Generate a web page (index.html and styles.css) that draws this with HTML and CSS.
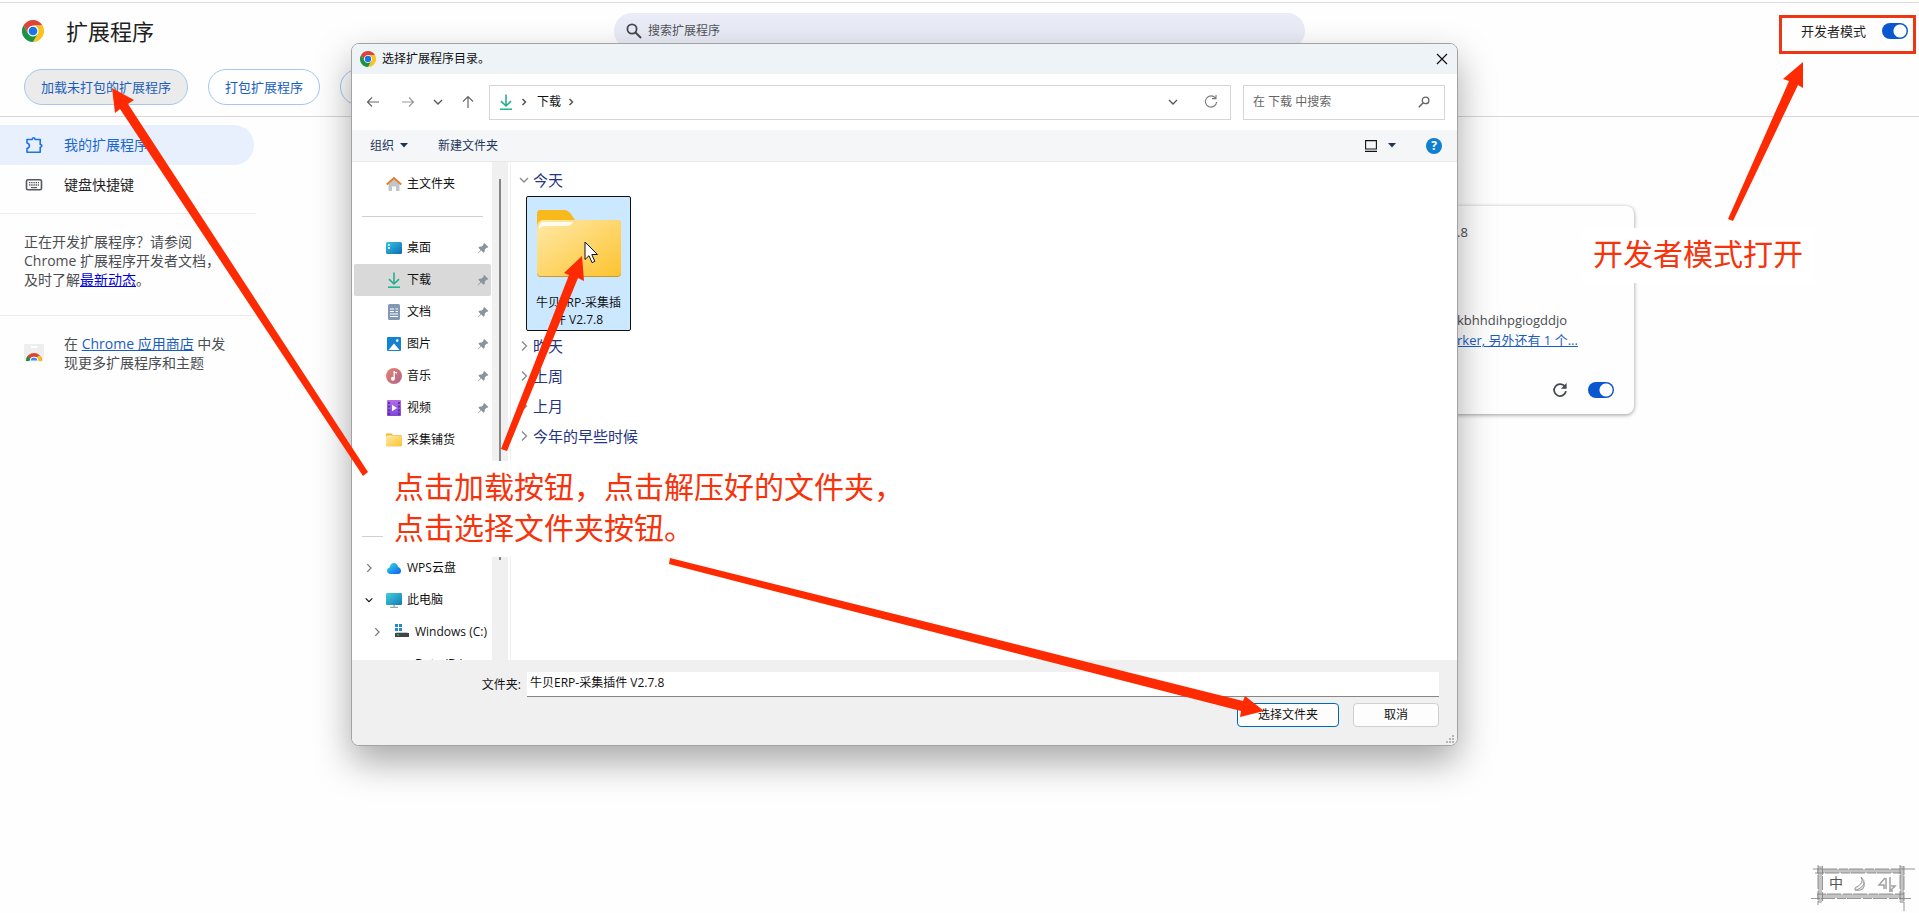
FILE: index.html
```html
<!DOCTYPE html>
<html lang="zh-CN">
<head>
<meta charset="utf-8">
<title>扩展程序</title>
<link rel="stylesheet" href="styles.css">
</head>
<body>
<svg class="defs" aria-hidden="true">
  <defs>
    <symbol id="chrome" viewBox="0 0 48 48">
      <circle cx="24" cy="24" r="12" fill="#fff"/>
      <path fill="#dc4437" d="M24,12H44.78a24,24,0,0,0-41.56,0L13.61,30l0,0A11.99,11.99,0,0,1,24,12Z"/>
      <path fill="#fcc31e" d="M34.39,30,24,48A23.99,23.99,0,0,0,44.78,12H24l0,0A11.99,11.99,0,0,1,34.39,30Z"/>
      <path fill="#1e9244" d="M13.61,30,3.22,12A23.99,23.99,0,0,0,24,48L34.39,30l0,0a11.99,11.99,0,0,1-20.78,0Z"/>
      <circle cx="24" cy="24" r="9.5" fill="#1a73e8"/>
    </symbol>
    <symbol id="download" viewBox="0 0 16 16">
      <g fill="none" stroke="#27ae8b" stroke-width="1.6"><path d="M8 0.5V11.5M3 7.2L8 12L13 7.2"/><path d="M2 15.2H14" stroke="#20b58f"/></g>
    </symbol>
    <symbol id="chev-r" viewBox="0 0 12 12"><path d="M4 1.5L8.5 6L4 10.5" fill="none" stroke="currentColor" stroke-width="1.3"/></symbol>
    <symbol id="chev-s" viewBox="0 0 10 10"><path d="M3.500 2L6.500 5L3.500 8" fill="none" stroke="currentColor" stroke-width="1.500"/></symbol>
    <symbol id="chev-d" viewBox="0 0 12 12"><path d="M2 4L6 8L10 4" fill="none" stroke="currentColor" stroke-width="1.3"/></symbol>
    <symbol id="pin" viewBox="0 0 12 12"><path fill="#8b949e" d="M7.2 1L11.4 5L10.4 5.8L9.6 5.7L7.8 7.5L7.6 10L6.6 10.8L4.2 8.5L1 11.6L.6 11.2L3.6 8L1.4 5.7L2.2 4.8L4.7 4.5L6.5 2.7L6.4 1.8Z"/></symbol>
    <symbol id="caret" viewBox="0 0 8 5"><path d="M0 0H8L4 4.6Z" fill="#1d3559"/></symbol>
    <symbol id="folder" viewBox="0 0 84 68">
      <path d="M3 0H27Q31 0 34 4L38 10H80Q84 10 84 14V40H0V4Q0 0 3 0Z" fill="#f8b91c"/>
      <path d="M2 15Q2 11 6 11H80Q84 11 84 15V63Q84 67 80 67H4Q0 67 0 63V17Z" fill="#c79a2c"/>
      <path d="M0 17Q1 10 6 10H80Q84 10 84 14V62Q84 66 80 66H4Q0 66 0 62Z" fill="url(#fg)"/>
      <path d="M2 17Q3 12 7 12H36Q34 16 29 16H7Q4 16 2 19Z" fill="#fff" opacity=".85"/>
    </symbol>
    <linearGradient id="fg" x1="0" y1="0" x2="1" y2="1"><stop offset="0" stop-color="#ffe9a8"/><stop offset="1" stop-color="#fdc32f"/></linearGradient>
    <linearGradient id="blue" x1="0" y1="0" x2="1" y2="1"><stop offset="0" stop-color="#35c3e8"/><stop offset="1" stop-color="#0e6bb0"/></linearGradient>
    <linearGradient id="teal" x1="0" y1="0" x2="1" y2="1"><stop offset="0" stop-color="#41d0dc"/><stop offset="1" stop-color="#1579b5"/></linearGradient>
    <linearGradient id="rose" x1="0" y1="0" x2="1" y2="1"><stop offset="0" stop-color="#e6866a"/><stop offset="1" stop-color="#b0628f"/></linearGradient>
    <linearGradient id="violet" x1="0" y1="0" x2="0" y2="1"><stop offset="0" stop-color="#b36be8"/><stop offset="1" stop-color="#8046d6"/></linearGradient>
    <linearGradient id="cloud" x1="0" y1="0" x2="1" y2="1"><stop offset="0" stop-color="#38e0d8"/><stop offset=".6" stop-color="#1a8ff0"/><stop offset="1" stop-color="#1260e0"/></linearGradient>
  </defs>
</svg>

<header class="top">
  <div class="bar">
    <div class="brand">
      <svg class="logo"><use href="#chrome"/></svg>
      <h1>扩展程序</h1>
    </div>
    <label class="find">
      <svg viewBox="0 0 16 16" class="i16"><circle cx="6" cy="6" r="4.6" fill="none" stroke="#44474d" stroke-width="1.8"/><path d="M9.5 9.5L15 15" stroke="#44474d" stroke-width="2"/></svg>
      <input type="text" placeholder="搜索扩展程序" aria-label="搜索扩展程序">
    </label>
    <label class="dev">开发者模式 <input class="switch" type="checkbox" checked></label>
  </div>
  <div class="actions">
    <button class="pill pressed">加载未打包的扩展程序</button>
    <button class="pill">打包扩展程序</button>
    <button class="pill">更新</button>
  </div>
</header>

<div class="page">
  <aside class="side">
    <nav>
      <a class="nav on" href="#">
        <svg viewBox="0 0 18 18" class="i18"><path d="M2 3.500H7.200Q7.200 1.800 8.600 1.800T10 3.500H15.200V8.400Q16.800 8.600 16.800 9.800T15.200 11.200V16.200H2V12.600Q4.400 12 4.400 9.800T2 7Z" fill="none" stroke="#1a73e8" stroke-width="1.600" stroke-linejoin="round"/></svg>我的扩展程序</a>
      <a class="nav" href="#">
        <svg viewBox="0 0 18 18" class="i18"><rect x="1.5" y="3.8" width="15" height="10" rx="1.5" fill="none" stroke="#55585c" stroke-width="1.6"/><path d="M4 6.6H14M4 9H14" stroke="#55585c" stroke-width="1.4" stroke-dasharray="1.4 .8"/><path d="M6 11.6H12" stroke="#55585c" stroke-width="1.2"/></svg>键盘快捷键</a>
    </nav>
    <p class="help">正在开发扩展程序？请参阅<br>Chrome 扩展程序开发者文档，<br>及时了解<a href="#">最新动态</a>。</p>
    <div class="store">
      <svg viewBox="0 0 20 18" class="storeicon"><path d="M0 0H20V6Q20 18 18 18H2Q0 18 0 12Z" fill="#eee"/><path d="M7 2H13V4H7Z" fill="#fff"/><path d="M2 17A8 8 0 0 1 18 17L14 17A4 4 0 0 0 6 17Z" fill="#dc4437"/><path d="M2 17A8 8 0 0 1 3.5 12L7 15L6 17Z" fill="#1e9244"/><path d="M18 17A8 8 0 0 0 15.4 11.5L12 13.6L14 17Z" fill="#fcc31e"/><path d="M6 17A4 4 0 0 1 14 17Z" fill="#4285f4" stroke="#fff"/></svg>
      <p>在 <a href="#">Chrome 应用商店</a> 中发现更多扩展程序和主题</p>
    </div>
  </aside>
  <main class="list">
    <article class="card">
      <span>.8</span>
      <div class="meta"><span>kbhhdihpgiogddjo</span><a href="#">rker, 另外还有 1 个...</a></div>
      <div class="foot">
        <svg viewBox="0 0 16 16" class="i16"><path d="M13 4.6A6 6 0 1 0 14 9.2" fill="none" stroke="#45484d" stroke-width="1.8"/><path d="M14.6 1V6.8H8.8Z" fill="#45484d"/></svg>
        <input class="switch" type="checkbox" checked aria-label="启用">
      </div>
    </article>
  </main>
</div>

<section class="dialog" role="dialog" aria-label="选择扩展程序目录。">
  <div class="titlebar">
    <svg class="i16"><use href="#chrome"/></svg><span>选择扩展程序目录。</span>
    <button class="plain close" aria-label="关闭"><svg viewBox="0 0 12 12" class="i12"><path d="M1 1L11 11M11 1L1 11" stroke="#111" stroke-width="1.2"/></svg></button>
  </div>
  <div class="path">
    <div class="arrows">
      <svg viewBox="0 0 14 14" class="i14"><path d="M13 7H1.5M6 2.500L1.5 7L6 11.500" fill="none" stroke="#666" stroke-width="1.2"/></svg>
      <svg viewBox="0 0 14 14" class="i14"><path d="M1 7H12.5M8 2.500L12.5 7L8 11.500" fill="none" stroke="#999" stroke-width="1.2"/></svg>
      <svg class="i12"><use href="#chev-d"/></svg>
      <svg viewBox="0 0 14 14" class="i14"><path d="M7 13V1.5M2 6.5L7 1.5L12 6.5" fill="none" stroke="#666" stroke-width="1.2"/></svg>
    </div>
    <div class="addr">
      <svg class="i16"><use href="#download"/></svg>
      <svg class="i10"><use href="#chev-s"/></svg><span>下载</span><svg class="i10"><use href="#chev-s"/></svg>
      <svg class="i12 push"><use href="#chev-d"/></svg>
      <svg viewBox="0 0 14 14" class="i14 dim"><path d="M11.4 3A5.6 5.6 0 1 0 12.6 7M8 3.6H12V0" fill="none" stroke="#777" stroke-width="1.1"/></svg>
    </div>
    <label class="lookup"><input type="text" placeholder="在 下载 中搜索" aria-label="在 下载 中搜索">
      <svg viewBox="0 0 12 12" class="i12"><circle cx="7.6" cy="4.4" r="3.3" fill="none" stroke="#666" stroke-width="1.3"/><path d="M5.2 6.8L.8 11.2" stroke="#666" stroke-width="1.6"/></svg></label>
  </div>
  <div class="tools">
    <button class="plain">组织<svg class="caret"><use href="#caret"/></svg></button>
    <button class="plain">新建文件夹</button>
    <button class="plain view" aria-label="视图"><svg viewBox="0 0 12 12" class="i12"><path d="M.6 .6H11.4V9H.6ZM0 11.4H12" fill="none" stroke="#111" stroke-width="1.1"/></svg><svg class="caret"><use href="#caret"/></svg></button>
    <button class="plain q" aria-label="帮助">?</button>
  </div>
  <div class="content">
    <ul class="tree">
      <li><i></i><svg viewBox="0 0 16 16" class="i16"><path d="M2.5 7L8 2.5L13.5 7V15H10V10.5H6V15H2.5Z" fill="#c3c6c9"/><path d="M.8 8.6L8 2L15.2 8.6" fill="none" stroke="#e08032" stroke-width="2"/></svg>主文件夹</li>
      <li class="sep"></li>
      <li><i></i><svg viewBox="0 0 16 16" class="i16"><rect y="2" width="16" height="12" rx="1.5" fill="url(#blue)"/><path d="M2 5H4M2 8H4" stroke="#fff" stroke-width="1.6"/></svg>桌面<svg class="pin"><use href="#pin"/></svg></li>
      <li class="sel"><i></i><svg class="i16"><use href="#download"/></svg>下载<svg class="pin"><use href="#pin"/></svg></li>
      <li><i></i><svg viewBox="0 0 16 16" class="i16"><rect x="2" width="12" height="16" rx="1.5" fill="#8298b4"/><path d="M4 5H8M4 7.500H8M9.500 5H12M9.500 7.500H12M4 10H12M4 12.500H12" stroke="#fff" stroke-width="1.200"/></svg>文档<svg class="pin"><use href="#pin"/></svg></li>
      <li><i></i><svg viewBox="0 0 16 16" class="i16"><rect x="1" y="1" width="14" height="14" rx="1" fill="#1482cf"/><path d="M2.5 14L8 7.5L13.5 14Z" fill="#fff"/><circle cx="11.2" cy="4.6" r="1.3" fill="#fff"/></svg>图片<svg class="pin"><use href="#pin"/></svg></li>
      <li><i></i><svg viewBox="0 0 16 16" class="i16"><circle cx="8" cy="8" r="8" fill="url(#rose)"/><path d="M8.2 3V10.6M8.2 3.6L11 5" stroke="#fff" stroke-width="1.4"/><circle cx="6.9" cy="10.8" r="2" fill="#fff"/></svg>音乐<svg class="pin"><use href="#pin"/></svg></li>
      <li><i></i><svg viewBox="0 0 16 16" class="i16"><rect x="1" width="14" height="16" rx="1" fill="url(#violet)"/><path d="M3 2V15M13 2V15" stroke="#4a2a91" stroke-width="1.6" stroke-dasharray="2 1.6"/><path d="M6 4.8L11 8L6 11.2Z" fill="#fff"/></svg>视频<svg class="pin"><use href="#pin"/></svg></li>
      <li><i></i><svg class="i16"><use href="#folder"/></svg>采集铺货</li>
      <li></li>
      <li></li>
      <li class="sep"></li>
      <li><svg class="i10"><use href="#chev-r"/></svg><svg viewBox="0 0 16 16" class="i16"><path d="M4 14Q1 13.4 1 10.6Q1 8 3.6 7.4Q4.6 3 8 3Q11.2 3 12 7Q15 8 15 10.8Q15 14 12 14Z" fill="url(#cloud)"/></svg>WPS云盘</li>
      <li><svg class="i10 dark"><use href="#chev-d"/></svg><svg viewBox="0 0 16 16" class="i16"><rect y="1" width="16" height="12" rx="1" fill="url(#teal)"/><path d="M4 15.4H12M8 13V15" stroke="#9aa4ac" stroke-width="1.4"/></svg>此电脑</li>
      <li class="sub"><svg class="i10"><use href="#chev-r"/></svg><svg viewBox="0 0 16 16" class="i16"><path d="M1 0H4V3H1ZM5 0H8V3H5ZM1 4H4V7H1ZM5 4H8V7H5Z" fill="#2389cf"/><path d="M3 8H13L15 10H1Z" fill="#c5c9cc"/><rect x="1" y="9" width="14" height="4" fill="#3f4649"/><rect x="3" y="10.4" width="2" height="1" fill="#59d36c"/></svg>Windows (C:)</li>
      <li class="sub drive"><i></i><i class="gap"></i>Data (D:)</li>
    </ul>
    <div class="scroll"><div class="thumb"></div></div>
    <div class="files">
      <h2><svg class="i12"><use href="#chev-d"/></svg>今天</h2>
      <figure class="tile">
        <svg class="big"><use href="#folder"/></svg>
        <figcaption>牛贝ERP-采集插件 V2.7.8</figcaption>
      </figure>
      <h2><svg class="i12"><use href="#chev-r"/></svg>昨天</h2>
      <h2><svg class="i12"><use href="#chev-r"/></svg>上周</h2>
      <h2><svg class="i12"><use href="#chev-r"/></svg>上月</h2>
      <h2><svg class="i12"><use href="#chev-r"/></svg>今年的早些时候</h2>
    </div>
  </div>
  <div class="bottom">
    <div class="field"><label for="dir">文件夹:</label><input id="dir" type="text" value="牛贝ERP-采集插件 V2.7.8"></div>
    <div class="btns"><button class="btn main">选择文件夹</button><button class="btn cancel">取消</button></div>
    <svg viewBox="0 0 9 9" class="grip"><path d="M6 0h2v2h-2zM3 3h2v2h-2zM6 3h2v2h-2zM0 6h2v2h-2zM3 6h2v2h-2zM6 6h2v2h-2z" fill="#b5b5b5"/></svg>
  </div>
</section>

<p class="note steps">点击加载按钮，点击解压好的文件夹，<br>点击选择文件夹按钮。</p>
<p class="note mode">开发者模式打开</p>
<svg class="marks" aria-hidden="true">
  <path d="M582 212V229.500L586 225.700L589 232.600L591.800 231.400L588.800 224.500H594.500Z" transform="translate(3 30)" fill="#fff" stroke="#111" stroke-width="1"/>
  <g fill="#fd2a02">
    <path d="M112 88L134 100L128 104L368 472L363 476L120 109L115 113Z"/>
    <path d="M582 256L584 281L578 278L507 451L501 449L569 275L564 273Z"/>
    <path d="M1264 711L1240 717L1241 711L669 564L670 558L1243 701L1245 696Z"/>
    <path d="M1803 62V88L1798 85L1733 221L1728 219L1789 81L1783 79Z"/>
  </g>
  <rect x="1780.500" y="16.500" width="134" height="36" fill="none" stroke="#f03512" stroke-width="3"/>
</svg>

<div class="ime">
  <svg viewBox="0 0 108 52" class="frame" aria-hidden="true">
    <g fill="none" stroke="#c4c4c4" stroke-width="4"><path d="M6 10H92M6 35H92M9 5V42M91 5V42"/></g>
    <g fill="none" stroke="#7c7c7c" stroke-width=".8"><path d="M2 8H106M4 12H90M0 37.500H100M6 33H94M7 4V44M11.500 5V41M89 4V41M93 5V50" stroke-dasharray="9 1 14 2"/></g>
    <path d="M50 16Q58 23 46 29Q43 30 44 27Q54 22 50 16ZM44 29Q55 31 53 21" fill="#e4e4e4" stroke="#999"/>
    <path d="M74 17L68 24H73V28M75 17V28M79 16V30L84 25H80M79 30H82" fill="none" stroke="#a0a0a0" stroke-width="1.500"/>
  </svg>
  <span>中</span>
</div>
</body>
</html>
```

FILE: styles.css
```css
* { box-sizing: border-box; }
body {
  margin: 0;
  min-height: 100vh;
  position: relative;
  overflow: hidden;
  background: #fefefe;
  color: #1f1f1f;
  font: 14px/20px "Open Sans", "Noto Sans CJK SC", sans-serif;
}
h1, h2, p, ul, figure { margin: 0; padding: 0; font-weight: 400; }
button, input { font: inherit; color: inherit; }
svg { flex: none; display: block; }
.defs { position: absolute; width: 0; height: 0; }
.i10 { width: 10px; height: 10px; }
.i12 { width: 12px; height: 12px; }
.i14 { width: 14px; height: 14px; }
.i16 { width: 16px; height: 16px; }
.i18 { width: 18px; height: 18px; }

/* Extensions page */
.top { border-bottom: 1px solid #d5d5d6; margin-top: 2px; border-top: 1px solid #ddd; }
.bar { display: grid; grid-template-columns: 1fr 36% 1fr; align-items: center; height: 56px; }
.brand { display: flex; align-items: center; gap: 22px; padding-left: 22px; }
.logo { width: 22px; height: 22px; }
h1 { font-size: 22px; line-height: 30px; }
.find { display: flex; align-items: center; gap: 6px; height: 36px; border-radius: 18px; padding: 0 12px; background: #e9ecf6; font-size: 12px; }
.find input { flex: 1; border: 0; background: none; outline: 0; padding: 0; }
.find input::placeholder { color: #505358; opacity: 1; }
.dev { justify-self: end; display: flex; align-items: center; gap: 16px; padding-right: 11px; font-size: 13px; }
.switch { appearance: none; flex: none; margin: 0; width: 26px; height: 16px; border-radius: 8px; background: radial-gradient(circle at 18px 8px, #fff 6px, #0b57d0 7px); }
.actions { display: flex; gap: 20px; padding: 10px 24px 11px; }
.pill { height: 36px; padding: 0 16px; border: 1px solid #a9c4ef; border-radius: 18px; background: #fff; color: #1a5dbd; font-size: 13px; }
.pressed { background: #ebebec; }
.page { display: flex; padding-top: 8px; }
.side { width: 256px; }
.nav { display: flex; align-items: center; gap: 21px; height: 40px; padding-left: 25px; margin-right: 2px; color: #1f1f1f; text-decoration: none; }
.nav.on { background: #e8f0fe; border-radius: 0 20px 20px 0; color: #1a67d2; }
.help { margin-top: 8px; padding: 18px 24px 24px; border: solid #ececec; border-width: 1px 0; line-height: 19px; color: #4a4d51; height: 103px; }
.help a { color: #0000e0; }
.store { display: flex; gap: 20px; align-items: center; padding: 18px 28px 0 24px; line-height: 19px; color: #4a4d51; }
.store a, .card a { color: #1a5dbd; }
.storeicon { width: 20px; height: 18px; }
.list { flex: 1; display: flex; justify-content: flex-end; padding: 81px 285px 0 0; }
.card { width: 400px; height: 208px; border-radius: 8px; padding: 16px 20px 8px 223px; background: #fefefe; box-shadow: 0 1px 4px rgba(0,0,0,.4); display: flex; flex-direction: column; font-size: 13px; color: #4a4d51; }
.meta { margin-top: 68px; display: flex; flex-direction: column; white-space: nowrap; }
.foot { display: flex; justify-content: flex-end; align-items: center; gap: 20px; margin-top: auto; height: 32px; }

/* File dialog */
.dialog {
  position: absolute; left: 351px; top: 43px; width: 1107px;
  border: 1px solid #a3a3a3; border-radius: 8px; overflow: hidden; background: #fff;
  box-shadow: 0 16px 36px rgba(0,0,0,.34);
  font-size: 12px; line-height: 16px; color: #111;
}
.plain { border: 0; background: none; padding: 0; display: flex; align-items: center; }
.titlebar { display: flex; align-items: center; gap: 6px; height: 30px; padding: 0 9px 0 8px; background: #eef3f8; }
.close { margin-left: auto; }
.path { display: flex; align-items: center; height: 56px; padding-right: 12px; color: #555; }
.arrows { display: flex; align-items: center; gap: 21px; width: 137px; padding-left: 14px; }
.arrows .i12 { margin: 0 -4px; }
.addr, .lookup { height: 35px; border: 1px solid #d5d5d5; display: flex; align-items: center; }
.addr { flex: 1; gap: 5px; padding: 0 12px 0 8px; margin-right: 12px; }
.addr span { color: #111; margin-left: 3px; }
.push { margin-left: auto; }
.dim { margin-left: 20px; }
.lookup { width: 202px; padding: 0 14px 0 9px; }
.lookup input { flex: 1; min-width: 0; border: 0; outline: 0; padding: 0; }
.lookup input::placeholder { color: #666; opacity: 1; }
.tools { display: flex; align-items: center; height: 32px; gap: 30px; padding: 0 15px 0 18px; background: #f4f6f8; border-bottom: 1px solid #e6e8ea; color: #1d3559; }
.caret { width: 8px; height: 5px; margin-left: 6px; }
.view { margin-left: auto; }
.view .caret { margin-left: 11px; }
.q { width: 16px; height: 16px; justify-content: center; border-radius: 8px; background: #0f7fd0; color: #fff; font-weight: 700; font-size: 12px; }
.content { display: flex; height: 498px; overflow: hidden; }
.tree { list-style: none; width: 140px; padding-top: 6px; white-space: nowrap; color: #111; }
.tree li { display: flex; align-items: center; height: 32px; padding: 0 2px 0 10px; margin: 0 1px 0 2px; }
.tree i, .tree .i10 { width: 10px; margin-right: 12px; color: #777; flex: none; }
.tree .i10.dark { color: #111; }
.tree .i16 { margin-right: 5px; }
.tree .sub { padding: 0 0 0 18px; }
.tree i.gap { width: 9px; }
.sel { background: #d9d9d9; border-radius: 2px; }
.tree .sep::before { content: ""; flex: 1; height: 1px; background: #d0d0d0; margin: 0 6px 0 -2px; }
.pin { width: 12px; height: 12px; margin-left: auto; }
.scroll { width: 16px; background: #f0f0f0; padding-top: 17px; }
.thumb { width: 2px; height: 381px; margin: 0 auto; background: #868686; }
.files { flex: 1; margin-left: 2px; border-left: 1px solid #f0f0f0; padding: 3px 0 0 7px; }
h2 { display: flex; align-items: center; gap: 3px; height: 30px; font-size: 15px; line-height: 20px; color: #26357f; }
h2 svg { color: #888; }
.tile { width: 105px; height: 135px; margin: 1px 0 0 8px; padding: 13px 6px 0; border: 1px solid #111; border-radius: 2px; background: #cce8ff; text-align: center; line-height: 17px; }
.big { width: 84px; height: 68px; margin: 0 auto 16px; }
.bottom { position: relative; height: 85px; background: #f0f0f0; padding: 12px 18px 0 40px; }
.field { display: flex; align-items: center; gap: 6px; }
.field label { width: 129px; text-align: right; }
.field input { flex: 1; height: 25px; border: 0; border-bottom: 1px solid #868686; background: #fff; padding: 0 3px 4px; outline: 0; }
.btns { display: flex; justify-content: flex-end; gap: 14px; margin-top: 6px; }
.btn { height: 24px; border: 1px solid #d0d0d0; border-radius: 4px; background: #fdfdfd; padding: 0; line-height: 16px; }
.btn.main { width: 102px; border-color: #0067c0; }
.btn.cancel { width: 86px; }
.grip { position: absolute; right: 2px; bottom: 1px; width: 9px; height: 9px; }

/* Annotations */
.note { position: absolute; font-size: 30px; line-height: 41px; color: #f7330c; background: #fff; white-space: nowrap; }
.steps { left: 383px; top: 461px; padding: 5px 0 9px 11px; }
.mode { left: 1582px; top: 228px; padding: 5px 11px 9px; }
.marks { position: absolute; left: 0; top: 0; width: 100%; height: 100%; pointer-events: none; }
.ime { position: absolute; right: 0; bottom: 0; width: 108px; height: 52px; }
.ime span { position: absolute; left: 18px; top: 12px; font-size: 14px; color: #555; }
.frame { width: 108px; height: 52px; }
```
